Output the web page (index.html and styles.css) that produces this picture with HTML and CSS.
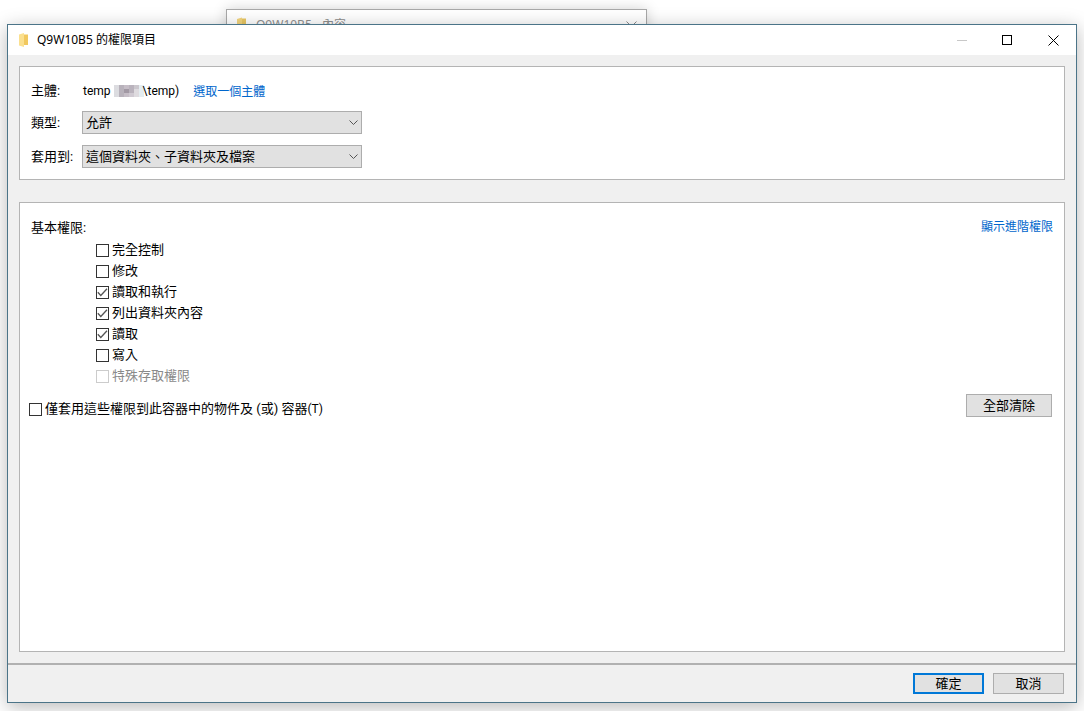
FILE: index.html
```html
<!DOCTYPE html>
<html lang="zh-Hant">
<head>
<meta charset="utf-8">
<title>Q9W10B5 的權限項目</title>
<link rel="stylesheet" href="styles.css">
</head>
<body>
<div class="desktop">
  <div class="window back-window">
    <svg class="folder" width="10" height="14" viewBox="0 0 10 14"><path d="M0 2 L5 0.5 V13.5 L0 12 Z" fill="#f3d57e"/><path d="M5 1.5 H9 V12 H5 Z" fill="#e9c763"/></svg>
    <span class="back-title">Q9W10B5 - 內容</span>
    <svg class="back-close" width="11" height="11" viewBox="0 0 11 11"><path d="M0.5 0.5 L10.5 10.5 M10.5 0.5 L0.5 10.5" stroke="#8a8a8a" fill="none"/></svg>
  </div>
  <div class="window main-window">
    <header class="titlebar">
      <svg class="folder" width="10" height="14" viewBox="0 0 10 14"><path d="M0 1.5 L5 0 V14 L0 12.5 Z" fill="#fbe08f"/><path d="M5 1.5 H9 V12 H5 Z" fill="#f1c85f"/></svg>
      <span class="title">Q9W10B5 的權限項目</span>
      <div class="caption">
        <span class="cap-btn"><svg class="min-icon" width="10" height="10" viewBox="0 0 10 10"><path d="M0 5.5 H10" stroke="#c8c8c8" fill="none"/></svg></span>
        <span class="cap-btn"><svg width="10" height="10" viewBox="0 0 10 10"><rect x="0.5" y="0.5" width="9" height="9" stroke="#000" fill="none"/></svg></span>
        <span class="cap-btn"><svg width="11" height="11" viewBox="0 0 11 11"><path d="M0.5 0.5 L10.5 10.5 M10.5 0.5 L0.5 10.5" stroke="#000" fill="none"/></svg></span>
      </div>
    </header>
    <main class="content">
      <section class="panel top-panel">
        <div class="row principal-row">
          <span class="label">主體:</span>
          <span class="principal"><span class="lat">temp</span><svg class="mosaic" width="30" height="12" viewBox="0 0 6 3" preserveAspectRatio="none" shape-rendering="crispEdges"><rect width="1" height="3" fill="#dcdce0"/><rect x="1" width="1" height="3" fill="#b8b2bb"/><rect x="2" width="1" height="3" fill="#c6bec7"/><rect x="2" y="1" width="1" height="1" fill="#a299a4"/><rect x="3" width="1" height="3" fill="#bab3bd"/><rect x="3" y="2" width="1" height="1" fill="#d0cad2"/><rect x="4" width="1" height="3" fill="#dedbdf"/><rect x="4" y="0" width="1" height="1" fill="#cbc7cd"/><rect x="5" width="1" height="3" fill="#e4edf1"/></svg><span class="lat backslash">\temp)</span></span>
          <a class="link">選取一個主體</a>
        </div>
        <div class="row">
          <span class="label">類型:</span>
          <div class="select"><span class="raise">允許</span><svg width="9" height="5" viewBox="0 0 9 5"><path d="M0.5 0.5 L4.5 4.5 L8.5 0.5" stroke="#555" fill="none"/></svg></div>
        </div>
        <div class="row">
          <span class="label">套用到:</span>
          <div class="select"><span class="raise">這個資料夾、子資料夾及檔案</span><svg width="9" height="5" viewBox="0 0 9 5"><path d="M0.5 0.5 L4.5 4.5 L8.5 0.5" stroke="#555" fill="none"/></svg></div>
        </div>
      </section>
      <section class="panel perm-panel">
        <div class="perm-head">
          <span class="raise">基本權限:</span>
          <a class="link">顯示進階權限</a>
        </div>
        <ul class="perms">
          <li class="perm"><span class="box"></span>完全控制</li>
          <li class="perm"><span class="box"></span>修改</li>
          <li class="perm"><span class="box"><svg width="11" height="9" viewBox="0 0 11 9"><path d="M0.8 4.2 L3.8 7.5 L10 0.8" stroke="#555" stroke-width="1.3" fill="none"/></svg></span>讀取和執行</li>
          <li class="perm"><span class="box"><svg width="11" height="9" viewBox="0 0 11 9"><path d="M0.8 4.2 L3.8 7.5 L10 0.8" stroke="#555" stroke-width="1.3" fill="none"/></svg></span>列出資料夾內容</li>
          <li class="perm"><span class="box"><svg width="11" height="9" viewBox="0 0 11 9"><path d="M0.8 4.2 L3.8 7.5 L10 0.8" stroke="#555" stroke-width="1.3" fill="none"/></svg></span>讀取</li>
          <li class="perm"><span class="box"></span>寫入</li>
          <li class="perm disabled"><span class="box"></span>特殊存取權限</li>
        </ul>
        <div class="apply-row">
          <label class="apply"><span class="box"></span><span class="apply-text">僅套用這些權限到此容器中的物件及 (或) 容器<span class="lat">(T)</span></span></label>
          <button class="btn clear-btn">全部清除</button>
        </div>
      </section>
    </main>
    <footer class="footer">
      <button class="btn primary">確定</button>
      <button class="btn">取消</button>
    </footer>
  </div>
</div>
</body>
</html>
```
FILE: styles.css
```css
* { box-sizing: border-box; }
html, body { margin: 0; height: 100%; }
body {
  background: #fff;
  font-family: Roboto, "Noto Sans CJK TC", sans-serif;
  font-size: 13px;
  color: #000;
  overflow: hidden;
}
.lat { font-size: 12px; }
.raise { margin-bottom: 2px; }
.desktop { position: relative; width: 1084px; height: 711px; overflow: hidden; }
.window { position: absolute; }
.back-window {
  left: 226px; top: 9px; width: 421px; height: 40px;
  background: #fff;
  border: 1px solid #a8a8a8;
  box-shadow: 0 0 14px rgba(0,0,0,.18);
  display: flex; align-items: flex-start;
  padding: 7px 10px 0 10px;
  gap: 9px;
}
.back-title { color: #8f8f8f; font-size: 12px; line-height: 16px; flex: 1; font-family: "Noto Sans", "Noto Sans CJK TC", sans-serif; }
.back-close { margin-top: 4px; margin-right: -1px; }
.main-window {
  left: 7px; top: 24px; width: 1070px; height: 679px;
  background: #f0f0f0;
  border: 1px solid #4b7488;
  box-shadow: 0 4px 18px rgba(0,0,0,.28);
  display: flex; flex-direction: column;
}
.titlebar {
  height: 30px; background: #fff;
  display: flex; align-items: center;
  padding-left: 11px;
  flex: none;
}
.titlebar .folder { flex: none; margin-bottom: 1px; }
.title { margin-left: 8px; margin-bottom: 2px; font-size: 12px; flex: 1; font-family: "Noto Sans", "Noto Sans CJK TC", sans-serif; }
.caption { display: flex; align-self: stretch; }
.cap-btn { width: 46px; display: flex; align-items: center; justify-content: center; }
.min-icon { margin-left: 2px; }
.content { flex: 1; display: flex; flex-direction: column; padding: 11px; gap: 22px; min-height: 0; }
.panel { background: #fff; border: 1px solid #b4b4b4; }
.top-panel { height: 114px; padding: 13px 11px 0 11px; display: flex; flex-direction: column; }
.row { display: flex; align-items: center; height: 23px; margin-bottom: 11px; }
.principal-row { height: 21px; margin-bottom: 10px; }
.label { width: 51px; flex: none; margin-bottom: 2px; }
.principal { display: inline-flex; align-items: center; margin-left: 1px; }
.mosaic { flex: none; margin-left: 3px; }
.backslash { margin-left: -1px; }
.link { color: #0066cc; margin-left: 14px; font-size: 12px; }
.select {
  width: 280px; height: 23px;
  background: #e1e1e1;
  border: 1px solid #adadad;
  display: flex; align-items: center; justify-content: space-between;
  padding: 0 3px 0 3px;
}
.perm-panel { flex: 1; padding: 14px 11px 0 11px; display: flex; flex-direction: column; }
.perm-head { display: flex; justify-content: space-between; line-height: 21px; height: 21px; }
.perm-head .link { margin-left: 0; }
.perms { list-style: none; margin: 2px 0 0 0; padding: 0 0 0 65px; }
.perm { display: flex; align-items: center; height: 21px; gap: 3px; padding-bottom: 4px; }
.perm .box { margin-top: 4px; }
.box {
  width: 13px; height: 13px; flex: none;
  background: #fff; border: 1px solid #333;
  display: inline-flex; align-items: center; justify-content: center;
}
.disabled { color: #8a8a8a; }
.disabled .box { border-color: #ccc; }
.apply-row { display: flex; justify-content: space-between; align-items: flex-start; margin-top: 7px; height: 23px; margin-left: -2px; margin-right: 1px; }
.apply { display: flex; align-items: center; gap: 3px; height: 13px; margin-top: 9px; }
.apply-text { margin-bottom: 5px; }
.btn {
  width: 71px; height: 21px;
  background: #e1e1e1; border: 1px solid #adadad;
  font: inherit; color: #000; padding: 0 0 2px 0;
}
.footer .btn { padding: 0; line-height: 15px; }
.clear-btn { width: 86px; height: 23px; }
.footer .primary { border: 2px solid #0078d7; }
.footer {
  height: 39px; flex: none;
  border-top: 2px solid #b1b1b1;
  display: flex; justify-content: flex-end; align-items: flex-start;
  gap: 9px;
  padding: 8px 12px 0 0;
}
```
